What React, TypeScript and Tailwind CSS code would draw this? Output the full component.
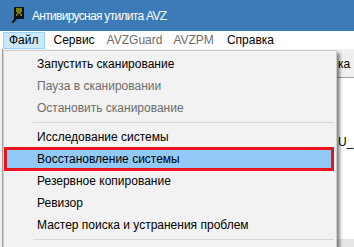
const font = { fontFamily: '"Liberation Sans", Arial, sans-serif' };

type Item = { label: string; disabled?: boolean; active?: boolean } | "sep";

const items: Item[] = [
  { label: "Запустить сканирование" },
  { label: "Пауза в сканировании", disabled: true },
  { label: "Остановить сканирование", disabled: true },
  "sep",
  { label: "Исследование системы" },
  { label: "Восстановление системы", active: true },
  { label: "Резервное копирование" },
  { label: "Ревизор" },
  { label: "Мастер поиска и устранения проблем" },
  "sep",
];

const AppIcon = () => (
  <svg width="14" height="17" viewBox="0 0 14 17">
    <rect x="3" y="0" width="10" height="12" fill="#111" />
    <path d="M5 2h6M5 4h6M6 6h4M5 8h6" stroke="#f2e600" strokeWidth="1.2" />
    <path d="M9 7 L1 16" stroke="#111" strokeWidth="2" />
    <path d="M0 16h2" stroke="#777" strokeWidth="1" />
  </svg>
);

const App = () => {
  return (
    <div className="w-[354px] h-[247px] overflow-hidden relative bg-[#f0f0f0] text-[12px] text-black" style={font}>
      <div className="h-[31px] bg-[#3c7bb8] flex items-center pl-[11px] gap-[7px] text-white">
        <AppIcon />
        <span className="leading-none tracking-[-0.7px]">Антивирусная утилита AVZ</span>
      </div>
      <div className="h-[18px] bg-white flex items-center pl-[3px] leading-none">
        <span className="h-[17px] px-[5px] flex items-center bg-[#cce8ff] border border-[#99d1ff]">Файл</span>
        <span className="ml-[9px]">Сервис</span>
        <span className="ml-[12px] text-[#6d6d6d]">AVZGuard</span>
        <span className="ml-[11px] text-[#6d6d6d]">AVZPM</span>
        <span className="ml-[13px]">Справка</span>
      </div>
      <div className="flex h-[198px]">
        <div className="w-[3px] border-r border-[#a0a0a0]" />
        <div className="flex-1" />
        <div className="w-[17px] flex flex-col">
          <div className="h-[29px] border-b border-[#a0a0a0] pl-[1px] pt-[9px] leading-none">ка</div>
          <div className="flex-1 bg-white pl-[1px] pt-[58px] leading-none whitespace-nowrap">U_</div>
          <div className="h-[8px] bg-[#e6e6e6]" />
        </div>
      </div>

      <div className="absolute left-[3px] top-[50px] w-[334px] bg-[#f2f2f2] border border-[#cccccc] pt-[2px] pb-[24px] shadow-[3px_3px_3px_rgba(0,0,0,0.45)]">
        {items.map((it, i) =>
          it === "sep" ? (
            <div key={i} className="h-[7px] flex items-center ml-[29px] mr-[2px]">
              <div className="h-px w-full bg-[#d7d7d7]" />
            </div>
          ) : (
            <div
              key={i}
              className={
                "h-[22px] flex items-center pl-[33px] leading-none relative " +
                (it.disabled ? "text-[#6d6d6d] " : "") +
                (it.active ? "bg-[#91c9f7] mr-[2px]" : "")
              }
            >
              {it.active && (
                <span className="absolute left-0 right-0 -top-[1px] -bottom-[1px] border-[3px] border-[#e8141e]" />
              )}
              <span className="relative">{it.label}</span>
            </div>
          )
        )}
      </div>
    </div>
  );
};

export default App;
